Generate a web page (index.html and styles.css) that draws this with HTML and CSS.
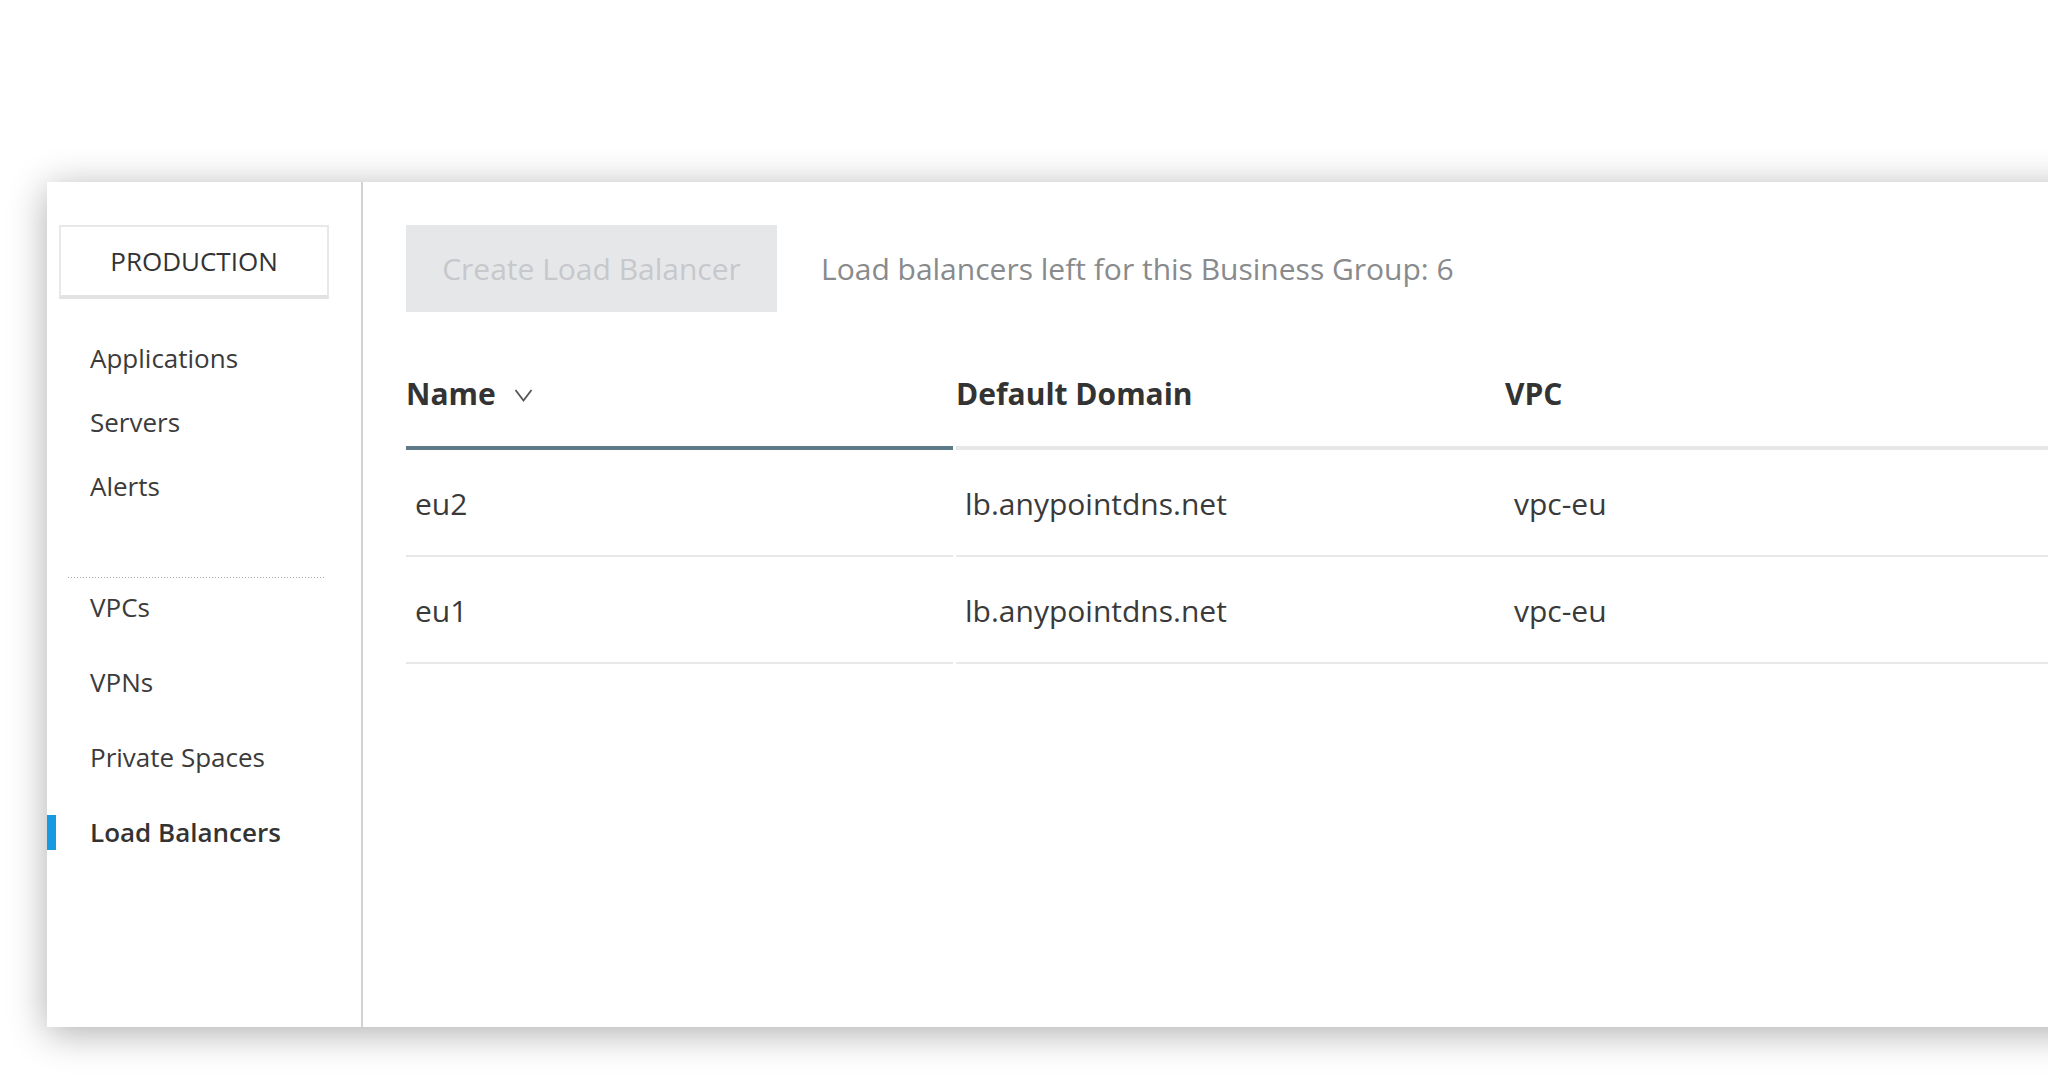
FILE: index.html
```html
<!DOCTYPE html>
<html>
<head>
<meta charset="utf-8">
<link rel="stylesheet" href="styles.css">
</head>
<body>
<div class="panel">
  <aside class="sidebar">
    <div class="env-box">PRODUCTION</div>
    <nav class="nav-group first">
      <div class="nav-item">Applications</div>
      <div class="nav-item">Servers</div>
      <div class="nav-item">Alerts</div>
    </nav>
    <div class="divider"></div>
    <nav class="nav-group second">
      <div class="nav-item">VPCs</div>
      <div class="nav-item">VPNs</div>
      <div class="nav-item">Private Spaces</div>
      <div class="nav-item active">Load Balancers</div>
    </nav>
  </aside>
  <main class="content">
    <div class="toolbar">
      <button class="create-btn" disabled>Create Load Balancer</button>
      <span class="remaining">Load balancers left for this Business Group: 6</span>
    </div>
    <div class="table">
      <div class="row head">
        <div class="cell sorted">Name <svg class="chev" width="19" height="14" viewBox="0 0 19 14"><path d="M1.5 2 L9.5 12.5 L17.5 2" fill="none" stroke="#555" stroke-width="1.8"/></svg></div>
        <div class="cell">Default Domain</div>
        <div class="cell">VPC</div>
      </div>
      <div class="row body">
        <div class="cell">eu2</div>
        <div class="cell">lb.anypointdns.net</div>
        <div class="cell">vpc-eu</div>
      </div>
      <div class="row body">
        <div class="cell">eu1</div>
        <div class="cell">lb.anypointdns.net</div>
        <div class="cell">vpc-eu</div>
      </div>
    </div>
  </main>
</div>
</body>
</html>
```

FILE: styles.css
```css
html, body {
  margin: 0;
  padding: 0;
  background: #ffffff;
  overflow: hidden;
  height: 1074px;
  width: 2048px;
}
body {
  font-family: "Open Sans", "Liberation Sans", sans-serif;
  color: #3a3a3a;
}
.panel {
  margin: 182px 0 0 47px;
  width: 2100px;
  height: 845px;
  background: #fff;
  display: flex;
  box-shadow: 0 6px 36px rgba(0, 0, 0, 0.32);
}
.sidebar {
  width: 314px;
  flex: none;
  border-right: 2px solid #d2d2d2;
  padding-top: 43px;
  box-sizing: content-box;
}
.env-box {
  margin-left: 12px;
  width: 270px;
  height: 74px;
  box-sizing: border-box;
  border: 2px solid #e8e8e8;
  border-bottom: 4px solid #e2e2e2;
  display: flex;
  align-items: center;
  justify-content: center;
  font-size: 26px;
  color: #333;
}
.nav-group {
  display: flex;
  flex-direction: column;
}
.nav-group.first {
  margin-top: 41px;
  gap: 28px;
}
.nav-group.second {
  margin-top: 11px;
  gap: 39px;
}
.nav-item {
  position: relative;
  height: 36px;
  line-height: 36px;
  padding-left: 43px;
  font-size: 26px;
  color: #3b3b3b;
}
.nav-item.active {
  font-weight: 600;
  color: #333;
}
.nav-item.active::before {
  content: "";
  position: absolute;
  left: 0;
  top: 1px;
  width: 9px;
  height: 35px;
  background: #169be1;
}
.divider {
  margin: 73px 0 0 21px;
  width: 258px;
  height: 1px;
  background: repeating-linear-gradient(to right, #a8a8a8 0, #a8a8a8 1px, transparent 1px, transparent 3px);
}
.content {
  flex: 1;
  padding: 43px 0 0 43px;
}
.toolbar {
  display: flex;
  align-items: center;
  gap: 44px;
  height: 87px;
}
.create-btn {
  width: 371px;
  height: 87px;
  border: none;
  background: #e6e7e9;
  color: #c6c8cb;
  font-family: "Open Sans", "Liberation Sans", sans-serif;
  font-size: 30px;
  padding: 0;
}
.remaining {
  font-size: 30px;
  color: #888a8c;
}
.table {
  margin-top: 62px;
}
.row {
  display: grid;
  grid-template-columns: 550px 549px 600px;
}
.row .cell:first-child {
  margin-right: 3px;
}
.cell {
  font-size: 30px;
  color: #3a3a3a;
}
.head .cell {
  font-weight: 700;
  color: #333;
  height: 40px;
  line-height: 40px;
  padding-bottom: 32px;
  border-bottom: 4px solid #e6e7e8;
  display: flex;
  align-items: center;
}
.head .cell.sorted {
  border-bottom-color: #5e7a88;
}
.chev {
  margin-left: 18px;
  margin-top: 2px;
}
.body .cell {
  height: 104px;
  display: flex;
  align-items: center;
  padding-left: 9px;
  border-bottom: 2px solid #e8e8e8;
  padding-top: 1px;
  box-sizing: content-box;
}
```
